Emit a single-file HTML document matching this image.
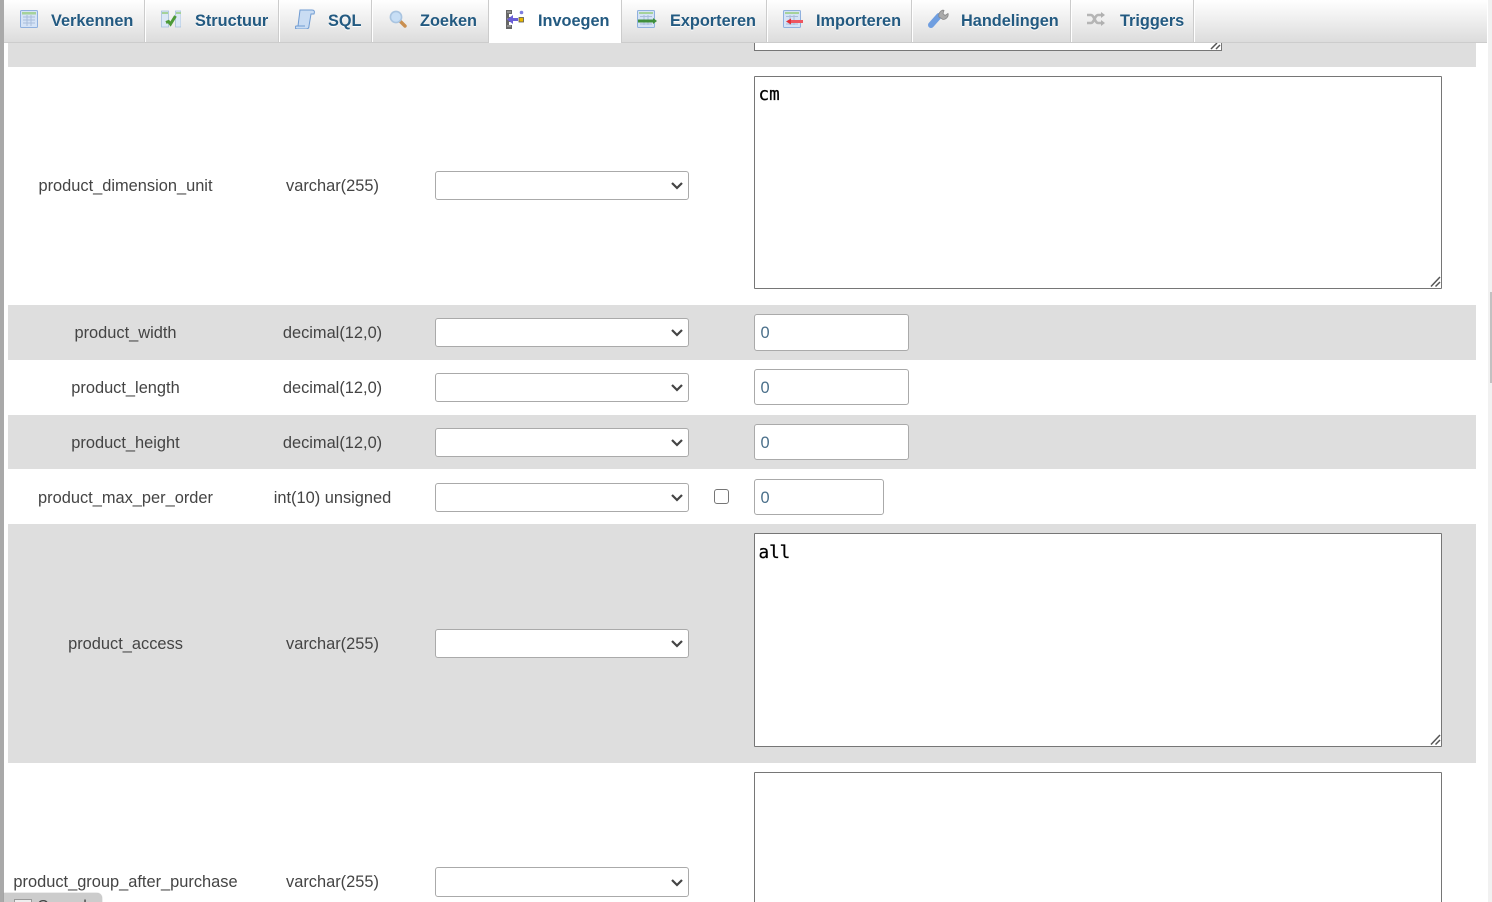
<!DOCTYPE html>
<html><head><meta charset="utf-8"><style>
html,body{margin:0;padding:0;width:1492px;height:902px;overflow:hidden;background:#fff}
body{position:relative;font-family:"Liberation Sans",sans-serif;font-size:16.4px;color:#444}
.abs,.row,.n,.t,select,input,textarea,.tab,svg.i,svg.c,svg.h{position:absolute}
.row{left:8px;width:1468px;background:#dedede}
.n,.t{text-align:center;line-height:20px;white-space:nowrap}
.n{left:8px;width:235px}
.t{left:243px;width:179px}
select{left:435px;width:254px;height:29px;box-sizing:border-box;background:#fff;border:1px solid #aaa;border-radius:3px;margin:0;font-size:16px;appearance:none;-webkit-appearance:none}
svg.c{left:670px;width:14px;height:9px}
svg.h{width:12px;height:12px}
input.v{left:754px;box-sizing:border-box;width:155px;height:37px;border:1px solid #aaa;border-radius:3px;margin:0;padding:2px 6px 0 5.5px;font:16.4px "Liberation Sans",sans-serif;color:#4a6f8a;background:#fff}
textarea{left:754px;width:688px;box-sizing:border-box;border:1px solid #767676;border-radius:1px;margin:0;padding:8px 3.5px;background:#fff;color:#000;font:17.6px/20px "DejaVu Sans Mono","Liberation Mono",monospace;-webkit-text-stroke:.25px #000;outline:0;resize:none}
.tab{top:0;height:42px;line-height:41px;font-weight:bold;font-size:16.3px;color:#235a81;text-shadow:0 1px 0 #fff;border-right:1px solid #ccc;box-shadow:1px 0 0 #fff;white-space:nowrap;box-sizing:content-box}
.tab span{position:absolute;top:1px}
</style></head><body>
<div class="abs" style="left:0;top:0;width:4px;height:902px;background:#a9a9a9"></div>

<div class="row" style="top:43px;height:24px"></div>
<div class="abs" style="left:754px;top:30px;width:468px;height:21px;box-sizing:border-box;border:1px solid #767676;background:#fff"></div>
<svg class="i" style="left:1209px;top:42px" width="12" height="8" viewBox="0 0 12 8"><path d="M2 7L8 1M7 7L11 3" stroke="#555" stroke-width="1.500" fill="none"/></svg>

<div class="row" style="top:305px;height:55px"></div>
<div class="row" style="top:415px;height:54px"></div>
<div class="row" style="top:524px;height:239px"></div>

<div class="n" style="top:176px">product_dimension_unit</div><div class="t" style="top:176px">varchar(255)</div>
<select style="top:171px"></select>
<svg class="c" style="top:181px" viewBox="0 0 14 9"><path d="M2 2l5 5 5-5" stroke="#444" stroke-width="2.200" fill="none"/></svg>
<textarea style="top:76px;height:213px">cm</textarea>
<svg class="h" style="left:1430px;top:276px" viewBox="0 0 12 12"><path d="M1 10.500L10 1M5.500 10.500L10 6" stroke="#555" stroke-width="1.500" fill="none"/></svg>

<div class="n" style="top:323px">product_width</div><div class="t" style="top:323px">decimal(12,0)</div>
<select style="top:318px"></select>
<svg class="c" style="top:328px" viewBox="0 0 14 9"><path d="M2 2l5 5 5-5" stroke="#444" stroke-width="2.200" fill="none"/></svg>
<input class="v" style="top:314px" value="0">

<div class="n" style="top:378px">product_length</div><div class="t" style="top:378px">decimal(12,0)</div>
<select style="top:373px"></select>
<svg class="c" style="top:383px" viewBox="0 0 14 9"><path d="M2 2l5 5 5-5" stroke="#444" stroke-width="2.200" fill="none"/></svg>
<input class="v" style="top:369px;height:36px" value="0">

<div class="n" style="top:433px">product_height</div><div class="t" style="top:433px">decimal(12,0)</div>
<select style="top:428px"></select>
<svg class="c" style="top:438px" viewBox="0 0 14 9"><path d="M2 2l5 5 5-5" stroke="#444" stroke-width="2.200" fill="none"/></svg>
<input class="v" style="top:424px;height:36px" value="0">

<div class="n" style="top:488px">product_max_per_order</div><div class="t" style="top:488px">int(10) unsigned</div>
<select style="top:483px"></select>
<svg class="c" style="top:493px" viewBox="0 0 14 9"><path d="M2 2l5 5 5-5" stroke="#444" stroke-width="2.200" fill="none"/></svg>
<div class="abs" style="left:714px;top:489px;width:15px;height:15px;box-sizing:border-box;border:1.500px solid #767676;border-radius:3px;background:#fff"></div>
<input class="v" style="top:479px;width:130px;height:36px" value="0">

<div class="n" style="top:634px">product_access</div><div class="t" style="top:634px">varchar(255)</div>
<select style="top:629px"></select>
<svg class="c" style="top:639px" viewBox="0 0 14 9"><path d="M2 2l5 5 5-5" stroke="#444" stroke-width="2.200" fill="none"/></svg>
<textarea style="top:533px;height:214px;padding-top:9px">all</textarea>
<svg class="h" style="left:1430px;top:734px" viewBox="0 0 12 12"><path d="M1 10.500L10 1M5.500 10.500L10 6" stroke="#555" stroke-width="1.500" fill="none"/></svg>

<div class="n" style="top:872px">product_group_after_purchase</div><div class="t" style="top:872px">varchar(255)</div>
<select style="top:867px;height:30px"></select>
<svg class="c" style="top:878px" viewBox="0 0 14 9"><path d="M2 2l5 5 5-5" stroke="#444" stroke-width="2.200" fill="none"/></svg>
<textarea style="top:772px;height:214px"></textarea>

<!-- menubar -->
<div class="abs" style="left:4px;top:0;width:1483px;height:42px;background:linear-gradient(#fff,#dcdcdc);border-bottom:1px solid #ccc"></div>
<div class="tab" style="left:4px;width:140px"><span style="left:47px">Verkennen</span></div>
<div class="tab" style="left:146px;width:132px"><span style="left:49px">Structuur</span></div>
<div class="tab" style="left:280px;width:91px"><span style="left:48px">SQL</span></div>
<div class="tab" style="left:373px;width:115px"><span style="left:47px">Zoeken</span></div>
<div class="tab" style="left:489px;width:132px;height:43px;background:#fff;border-right:1px solid #ccc;box-shadow:none"><span style="left:49px">Invoegen</span></div>
<div class="tab" style="left:622px;width:144px"><span style="left:48px">Exporteren</span></div>
<div class="tab" style="left:768px;width:143px"><span style="left:48px">Importeren</span></div>
<div class="tab" style="left:913px;width:157px"><span style="left:48px">Handelingen</span></div>
<div class="tab" style="left:1072px;width:121px"><span style="left:48px">Triggers</span></div>

<!-- icons -->
<svg class="i" style="left:20px;top:10px" width="18" height="18" viewBox="0 0 18 18"><rect x=".5" y=".5" width="17" height="17" rx="1" fill="#d5e3f6" stroke="#8fb0de"/><rect x="2" y="2" width="14" height="2.500" fill="#a5d29a"/><path d="M3 7h12M3 10h12M3 13h12M7 5v11M11 5v11" stroke="#a9bedb"/></svg>
<svg class="i" style="left:161px;top:10px" width="20" height="18" viewBox="0 0 20 18"><rect x=".5" y="1" width="7" height="16" fill="#dbe8f6" stroke="#a5c0dd" stroke-width=".8"/><rect x="14.500" y="1" width="5.500" height="16" fill="#dbe8f6" stroke="#a5c0dd" stroke-width=".8"/><rect x="1" y="2" width="6" height="2" fill="#a5d29a"/><rect x="15" y="2" width="5" height="2" fill="#a5d29a"/><path d="M5 12.500l2.500-1 2 2.500 5-8" stroke="#4d9a38" stroke-width="3" fill="none"/></svg>
<svg class="i" style="left:295px;top:9px" width="20" height="20" viewBox="0 0 20 20"><path d="M5 1h12c2 0 3 1 2 4h-3l-2 12c0 2-1 3-3 3H2c-2 0-2-2-1-3h2L5 1z" fill="#c9dcf3" stroke="#6f9bd2"/><path d="M1 17h9" stroke="#6f9bd2"/></svg>
<svg class="i" style="left:389px;top:10px" width="18" height="18" viewBox="0 0 18 18"><path d="M11 11l5 5" stroke="#c98f50" stroke-width="3.400" stroke-linecap="round"/><circle cx="7" cy="7" r="5.600" fill="#c7def5" stroke="#a9c4e0" stroke-width="1.600"/></svg>
<svg class="i" style="left:506px;top:10px" width="18" height="19" viewBox="0 0 18 19"><path d="M0 0h6v4H3v3h2v5H3v3h3v4H0z" fill="#666"/><path d="M1 2h4M1 9h2M1 16h4" stroke="#bbb"/><path d="M12 8H7V5L1 9.500 7 14v-3h5z" fill="#6a5fd6"/><rect x="13" y="7.500" width="4.500" height="4.500" fill="#e8b800" stroke="#555" stroke-width=".8"/><circle cx="15.500" cy="2.500" r="1.800" fill="#7d7de0"/></svg>
<svg class="i" style="left:637px;top:10px" width="20" height="18" viewBox="0 0 20 18"><rect x=".5" y=".5" width="17" height="17" rx="1" fill="#d5e3f6" stroke="#8fb0de"/><rect x="2" y="2" width="14" height="2" fill="#a5d29a"/><path d="M3 6.500h12M3 14h12M7 5v10M11 5v10" stroke="#a9bedb"/><path d="M1 11h15" stroke="#3f8f3c" stroke-width="3"/><path d="M16 8l4 3-4 3z" fill="#3f8f3c"/></svg>
<svg class="i" style="left:783px;top:10px" width="20" height="18" viewBox="0 0 20 18"><rect x=".5" y=".5" width="17" height="17" rx="1" fill="#d5e3f6" stroke="#8fb0de"/><rect x="2" y="2" width="14" height="2" fill="#a5d29a"/><path d="M3 6.500h12M3 14h12M7 5v10M11 5v10" stroke="#a9bedb"/><path d="M8 11.500h12" stroke="#ee5560" stroke-width="3"/><path d="M8 8.500l-5 3 5 3z" fill="#e0303a"/></svg>
<svg class="i" style="left:927px;top:9px" width="22" height="20" viewBox="0 0 22 20"><path d="M4 16l8-9" stroke="#6f9ee0" stroke-width="6" stroke-linecap="round"/><path d="M12 8c-1-3 1-6 4-7l1 .5-1 3 2 2 3-2c1 3-2 6-5 6z" fill="#aaa" stroke="#888" stroke-width=".8"/></svg>
<svg class="i" style="left:1087px;top:12px" width="18" height="14" viewBox="0 0 18 14"><path d="M0 3h4c3 0 4 8 7 8h3M0 11h4c3 0 4-8 7-8h3" stroke="#b5b5b5" stroke-width="2.600" fill="none"/><path d="M14 0l4 3-4 3zM14 8l4 3-4 3z" fill="#b0b0b0"/></svg>

<!-- console -->
<div class="abs" style="left:4px;top:893px;width:98px;height:12px;background:#ccc;border-radius:0 5px 0 0;box-shadow:0 0 1px #888;overflow:hidden">
<div class="abs" style="left:10px;top:6px;width:16px;height:16px;background:#eee;border:1px solid #999"></div>
<div class="abs" style="left:33px;top:5px;font-size:16px;line-height:18px;color:#444">Console</div></div>

<!-- scrollbar -->
<div class="abs" style="left:1488px;top:0;width:4px;height:902px;background:#f1f1f1"></div>
<div class="abs" style="left:1490px;top:292px;width:2px;height:91px;background:#c1c1c1"></div>
</body></html>
